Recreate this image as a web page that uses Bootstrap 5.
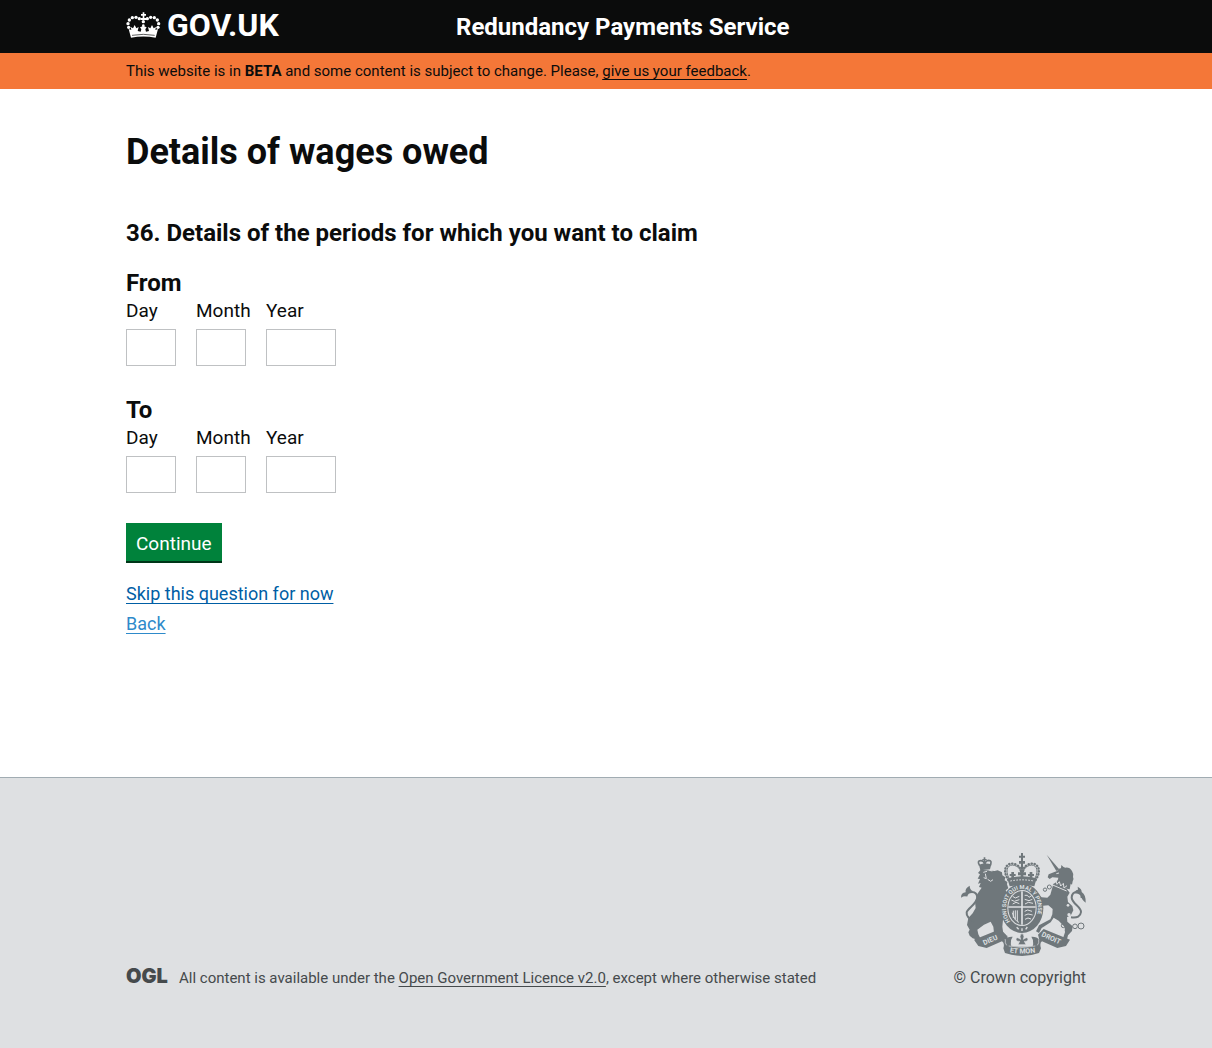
<!DOCTYPE html>
<html lang="en">
<head>
<meta charset="utf-8">
<meta name="viewport" content="width=device-width, initial-scale=1">
<title>Details of wages owed - Redundancy Payments Service</title>
<link rel="stylesheet" href="https://cdn.jsdelivr.net/npm/bootstrap@5.3.0/dist/css/bootstrap.min.css">
<style>
body { font-family: Roboto, "Liberation Sans", Arial, sans-serif; font-size: 19px; line-height: 25px; color: #0b0c0c; background: #fff; }
.page-width { max-width: 990px; padding-left: 15px; padding-right: 15px; }
.site-header { background: #0b0c0c; min-height: 53px; }
.brand-col { flex: 0 0 330px; }
.brand-link { font-size: 32px; line-height: 33px; font-weight: 700; gap: 6px; }
.service-name { font-size: 24px; line-height: 30px; font-weight: 700; }
.beta-bar { background: #f47738; font-size: 15px; line-height: 20px; padding: 8px 0; }
.beta-bar a { color: #0b0c0c; }
a { text-underline-offset: 3px; text-decoration-thickness: 1px; text-decoration-skip-ink: none; }
h1 { font-size: 36px; line-height: 40px; font-weight: 700; margin: 0 0 46px; }
.question { font-size: 24px; line-height: 30px; font-weight: 700; margin: 0 0 21px; }
main { padding-top: 43px; padding-bottom: 60px; }
.date-group { margin-bottom: 30px; }
.date-group legend { font-size: 24px; line-height: 29px; font-weight: 700; margin: 0; }
.date-row { gap: 20px; }
.date-part { width: 50px; }
.date-part.year-part { width: 70px; }
.date-part label { margin-bottom: 6px; white-space: nowrap; }
.date-part .form-control { height: 37px; border: 1px solid #bfc1c3; border-radius: 0; padding: 4px; font-size: 19px; }
.btn-continue { --bs-btn-color: #fff; --bs-btn-bg: #00823b; --bs-btn-hover-color: #fff; --bs-btn-hover-bg: #00692f; --bs-btn-active-bg: #00692f; --bs-btn-active-color: #fff; border: 0; border-bottom: 2px solid #003618; border-radius: 0; font-size: 19px; line-height: 25px; padding: 8px 10px 5px; margin-bottom: 16px; }
.step-links { font-size: 18px; line-height: 30px; }
.step-links a { color: #005ea5; }
.step-links a.back-link { color: #2e8aca; }
.site-footer { background: #dee0e2; border-top: 1px solid #a1acb2; color: #454a4c; font-size: 16px; line-height: 20px; padding: 74px 0 60px; }
.site-footer a { color: #454a4c; }
.licence-text { font-size: 15px; }
.ogl-mark { font-family: Inter, sans-serif; font-weight: 900; font-size: 20px; line-height: 16px; width: 53px; }
.arms-label { margin-top: 12px; }
</style>
</head>
<body class="d-flex flex-column min-vh-100">
<header class="site-header d-flex align-items-center">
  <div class="container-fluid page-width d-flex flex-wrap align-items-center">
    <div class="brand-col">
      <a href="#" class="brand-link d-inline-flex align-items-center text-white text-decoration-none">
        <svg width="35" height="27" viewBox="30 37 105 81" fill="#fff" aria-hidden="true">
          <path d="M80 38h5v5h5v5h-5v7h5v6h-15v-6h5v-7h-5v-5h5z"/>
          <circle cx="82" cy="66" r="5"/><circle cx="82" cy="78" r="4"/>
          <circle cx="70" cy="57" r="5"/><circle cx="60" cy="53" r="5"/><circle cx="49" cy="54" r="5"/><circle cx="40" cy="61" r="5"/><circle cx="36" cy="72" r="5"/><circle cx="38" cy="83" r="5"/>
          <circle cx="94" cy="57" r="5"/><circle cx="104" cy="53" r="5"/><circle cx="115" cy="54" r="5"/><circle cx="124" cy="61" r="5"/><circle cx="128" cy="72" r="5"/><circle cx="126" cy="83" r="5"/>
          <path d="M38 88l8 3-2-9 7 4 5-10 5 10 7-4-3 12 9 2 2-7-4-6 10-4 10 4-4 6 2 7 9-2-3-12 7 4 5-10 5 10 7-4-2 9 8-3-7 26q-37-7-74 0z"/>
          <path d="M48 107q34-6 68 0" stroke="#0b0c0c" stroke-width="2" fill="none"/>
        </svg>
        <span>GOV.UK</span>
      </a>
    </div>
    <div class="service-name text-white">Redundancy Payments Service</div>
  </div>
</header>
<div class="beta-bar">
  <div class="container-fluid page-width">This website is in <b>BETA</b> and some content is subject to change. Please, <a href="#">give us your feedback</a>.</div>
</div>
<main class="flex-grow-1">
  <div class="container-fluid page-width">
    <h1>Details of wages owed</h1>
    <h2 class="question">36. Details of the periods for which you want to claim</h2>
    <form>
      <fieldset class="date-group">
        <legend>From</legend>
        <div class="d-flex date-row">
          <div class="date-part"><label class="d-block" for="from-day">Day</label><input class="form-control" id="from-day" type="text" inputmode="numeric"></div>
          <div class="date-part"><label class="d-block" for="from-month">Month</label><input class="form-control" id="from-month" type="text" inputmode="numeric"></div>
          <div class="date-part year-part"><label class="d-block" for="from-year">Year</label><input class="form-control" id="from-year" type="text" inputmode="numeric"></div>
        </div>
      </fieldset>
      <fieldset class="date-group">
        <legend>To</legend>
        <div class="d-flex date-row">
          <div class="date-part"><label class="d-block" for="to-day">Day</label><input class="form-control" id="to-day" type="text" inputmode="numeric"></div>
          <div class="date-part"><label class="d-block" for="to-month">Month</label><input class="form-control" id="to-month" type="text" inputmode="numeric"></div>
          <div class="date-part year-part"><label class="d-block" for="to-year">Year</label><input class="form-control" id="to-year" type="text" inputmode="numeric"></div>
        </div>
      </fieldset>
      <button type="submit" class="btn btn-continue">Continue</button>
      <div class="step-links">
        <div><a href="#">Skip this question for now</a></div>
        <div><a href="#" class="back-link">Back</a></div>
      </div>
    </form>
  </div>
</main>
<footer class="site-footer">
  <div class="container-fluid page-width d-flex flex-wrap justify-content-between align-items-end">
    <div class="d-flex">
      <div class="ogl-mark">OGL</div>
      <div class="licence-text">All content is available under the <a href="#">Open Government Licence v2.0</a>, except where otherwise stated</div>
    </div>
    <div class="text-end">
      <svg class="d-block ms-auto" width="126" height="104" viewBox="30 21 378 312" fill="#6f777b" role="img" aria-label="Royal coat of arms">
        <!-- lion and its crown -->
        <path d="M89 62q-9-15 3-15 10 0 12 12 2-12 12-13 11 0 5 15" fill="none" stroke="#6f777b" stroke-width="5"/>
        <path d="M101 37h5v5h4v4h-4v12h-5V46h-4v-4h4zM87 59q18-6 37-1l-4 15-29 3z"/>
        <path d="M92 74l-8 10 6 4-7 13 7 1-6 14 8-2-5 12 8 2-13 19-7 23 2 19-9 16-13 14-4 21 8 14-4 8 4 10 9 8 7 2 1 7 12-1 3-8-6-12-3-14 20-15 20-9 8 15 2 18-6 9 4 8 43 3-1-11-12-6-3-21 2-21 10-8 10 16 14 4-14-30 5-23-8-22-5-17-4-8 8-6-4-12 1-7-8-5 2-9-9-6-1-9-13-6-9 2z"/>
        <path d="M100 82l11-3M118 76l9 2M106 86l3 15-8-3M113 103l9 6 7-5" stroke="#dee0e2" stroke-width="3" fill="none"/>
        <path d="M73 229q-25-12-23-27c2-11 31-26 32-44q-1-17-16-17-15 0-17 13" fill="none" stroke="#6f777b" stroke-width="6"/>
        <path d="M33 158q0-15 14-16-3-12 12-20 0 12 9 16-16 6-21 16-6-1-14 4z"/>
        <!-- unicorn, chain and tail -->
        <path d="M290 29l37 43-8 6z"/>
        <path d="M321 78q4-9 12-8l1-10q7 8 12 8 13-2 20 10 6 9 3 18 4 7-1 13l-2 10-4-3-3 17-17-3-34-12q16-8 17-20l-18-1-8 5-6-5 3-9z"/>
        <path d="M310 117l40 14 9 12-7 12 2 16 13 12 3 13-7 14-12 7 1 13 16 14-2 14-12 13-5 19-12-4 8-24-1-16-18-19-15-9-9 14-27 17-8 15-9-5 9-18 34-18 6-15 1-16-13-11-16 1-7 12 2 13-9-5-3-14 9-15-14-9-4-15 7-4 15 12 17 1 9-9z"/>
        <path d="M319 86l8-2M308 120l42 18" stroke="#dee0e2" stroke-width="3"/>
        <path d="M312 113l5-7 4 12 7-8 4 13 8-8 2 14 9-7" stroke="#dee0e2" stroke-width="3" fill="none"/>
        <g fill="none" stroke="#6f777b" stroke-width="3"><circle cx="298" cy="126" r="6"/><circle cx="285" cy="134" r="5"/><circle cx="340" cy="242" r="6"/><circle cx="353" cy="257" r="7"/><circle cx="375" cy="244" r="7"/><circle cx="393" cy="243" r="9"/></g>
        <g fill="#dee0e2"><circle cx="354" cy="181" r="4"/><circle cx="357" cy="209" r="5"/></g>
        <path d="M363 217q28 4 30-16c1-15-27-25-28-43q1-17 15-17 15 0 15 18" fill="none" stroke="#6f777b" stroke-width="6"/>
        <path d="M374 145q1-10 10-11l-1-9q13 7 12 16 13 8 12 32-13-9-15-22-7-6-18-6z"/>
        <!-- central crown -->
        <path d="M213 24h6v8h6v6h-6v10h6v8h-6v18h-6V56h-6v-8h6V38h-6v-6h6z"/>
        <path d="M175 105c-22-34-2-55 19-48q19 7 19 24M257 105c22-34 2-55-19-48q-19 7-19 24" fill="none" stroke="#6f777b" stroke-width="7" stroke-linecap="round" stroke-dasharray="1 8"/>
        <path d="M178 102c-16-30-2-46 15-41q17 5 19 20M254 102c16-30 2-46-15-41q-17 5-19 20" fill="none" stroke="#6f777b" stroke-width="3"/>
        <path d="M172 100q43-12 88 0l-7 24q-37-8-74 0z"/>
        <path d="M212 99v-8h-8v-9h7v-7h9v7h8v9h-8v8zM184 101v-8h-5v-6h5v-6h8v6h5v6h-5v8zM239 101v-8h-5v-6h5v-6h8v6h5v6h-5v8z"/>
        <path d="M181 108q35-7 70 0" stroke="#dee0e2" stroke-width="3" stroke-dasharray="5 4" fill="none"/>
        <!-- garter and shield -->
        <ellipse cx="216" cy="190" rx="64" ry="74"/>
        <ellipse cx="216" cy="189" rx="44" ry="54" fill="#dee0e2"/>
        <ellipse cx="216" cy="189" rx="41" ry="51"/>
        <path d="M216 139v100M175 186h82" stroke="#dee0e2" stroke-width="5"/>
        <path d="M188 154l8 5 12-5M184 165l9 4 15-5M188 177l10-5 10 4M224 151h8l5 6 8-5M224 163l13 4 10-4M225 177l10-5 14 3M224 199l9-4 13 4M224 211l10-4 14 3M225 223l9-4 9 3M190 197v22M196 196v28M202 196v32M187 203q8 27 20 29" stroke="#dee0e2" stroke-width="3" fill="none"/>
        <path id="garter-line" d="M182 231A48 58 0 1 1 250 231" fill="none"/>
        <text fill="#dee0e2" font-family="Roboto, sans-serif" font-weight="700" font-size="17"><textPath href="#garter-line" startOffset="2">HONI SOIT QUI MAL Y PENSE</textPath></text>
        <path d="M200 247l6 6M216 250v8M232 246l-5 7" stroke="#dee0e2" stroke-width="4"/>
        <!-- motto ribbon -->
        <path d="M72 284l79-32 17 17-4 15q8-10 24-9-7 9-5 27 33 7 66 0 2-18-5-27 16-1 24 9l-4-15 17-17 79 32-12 19-26 6-46-20q-8 5-3 21l-6 14q-50 18-102 0l-5-14q5-16-4-21l-46 20-25-6z"/>
        <path d="M166 283q-2 12 4 18M266 283q2 12-4 18M176 303q40 9 80 0" fill="none" stroke="#dee0e2" stroke-width="2"/>
        <path d="M216 264q10 9 4 19 14-10 14 0 0 8-11 6l5 10h-24l5-10q-11 2-11-6 0-10 14 0-6-10 4-19z" stroke="#dee0e2" stroke-width="2"/>
        <path id="motto-left" d="M103 301l60-27" fill="none"/><path id="motto-mid" d="M179 322q37 7 82 0" fill="none"/><path id="motto-right" d="M273 273l68 31" fill="none"/>
        <g fill="#dee0e2" font-family="Roboto, sans-serif" font-weight="700" font-size="21"><text><textPath href="#motto-left">DIEU</textPath></text><text><textPath href="#motto-mid">ET MON</textPath></text><text><textPath href="#motto-right">DROIT</textPath></text></g>
      </svg>
      <div class="arms-label">© Crown copyright</div>
    </div>
  </div>
</footer>
<script src="https://cdn.jsdelivr.net/npm/bootstrap@5.3.0/dist/js/bootstrap.bundle.min.js"></script>
</body>
</html>
